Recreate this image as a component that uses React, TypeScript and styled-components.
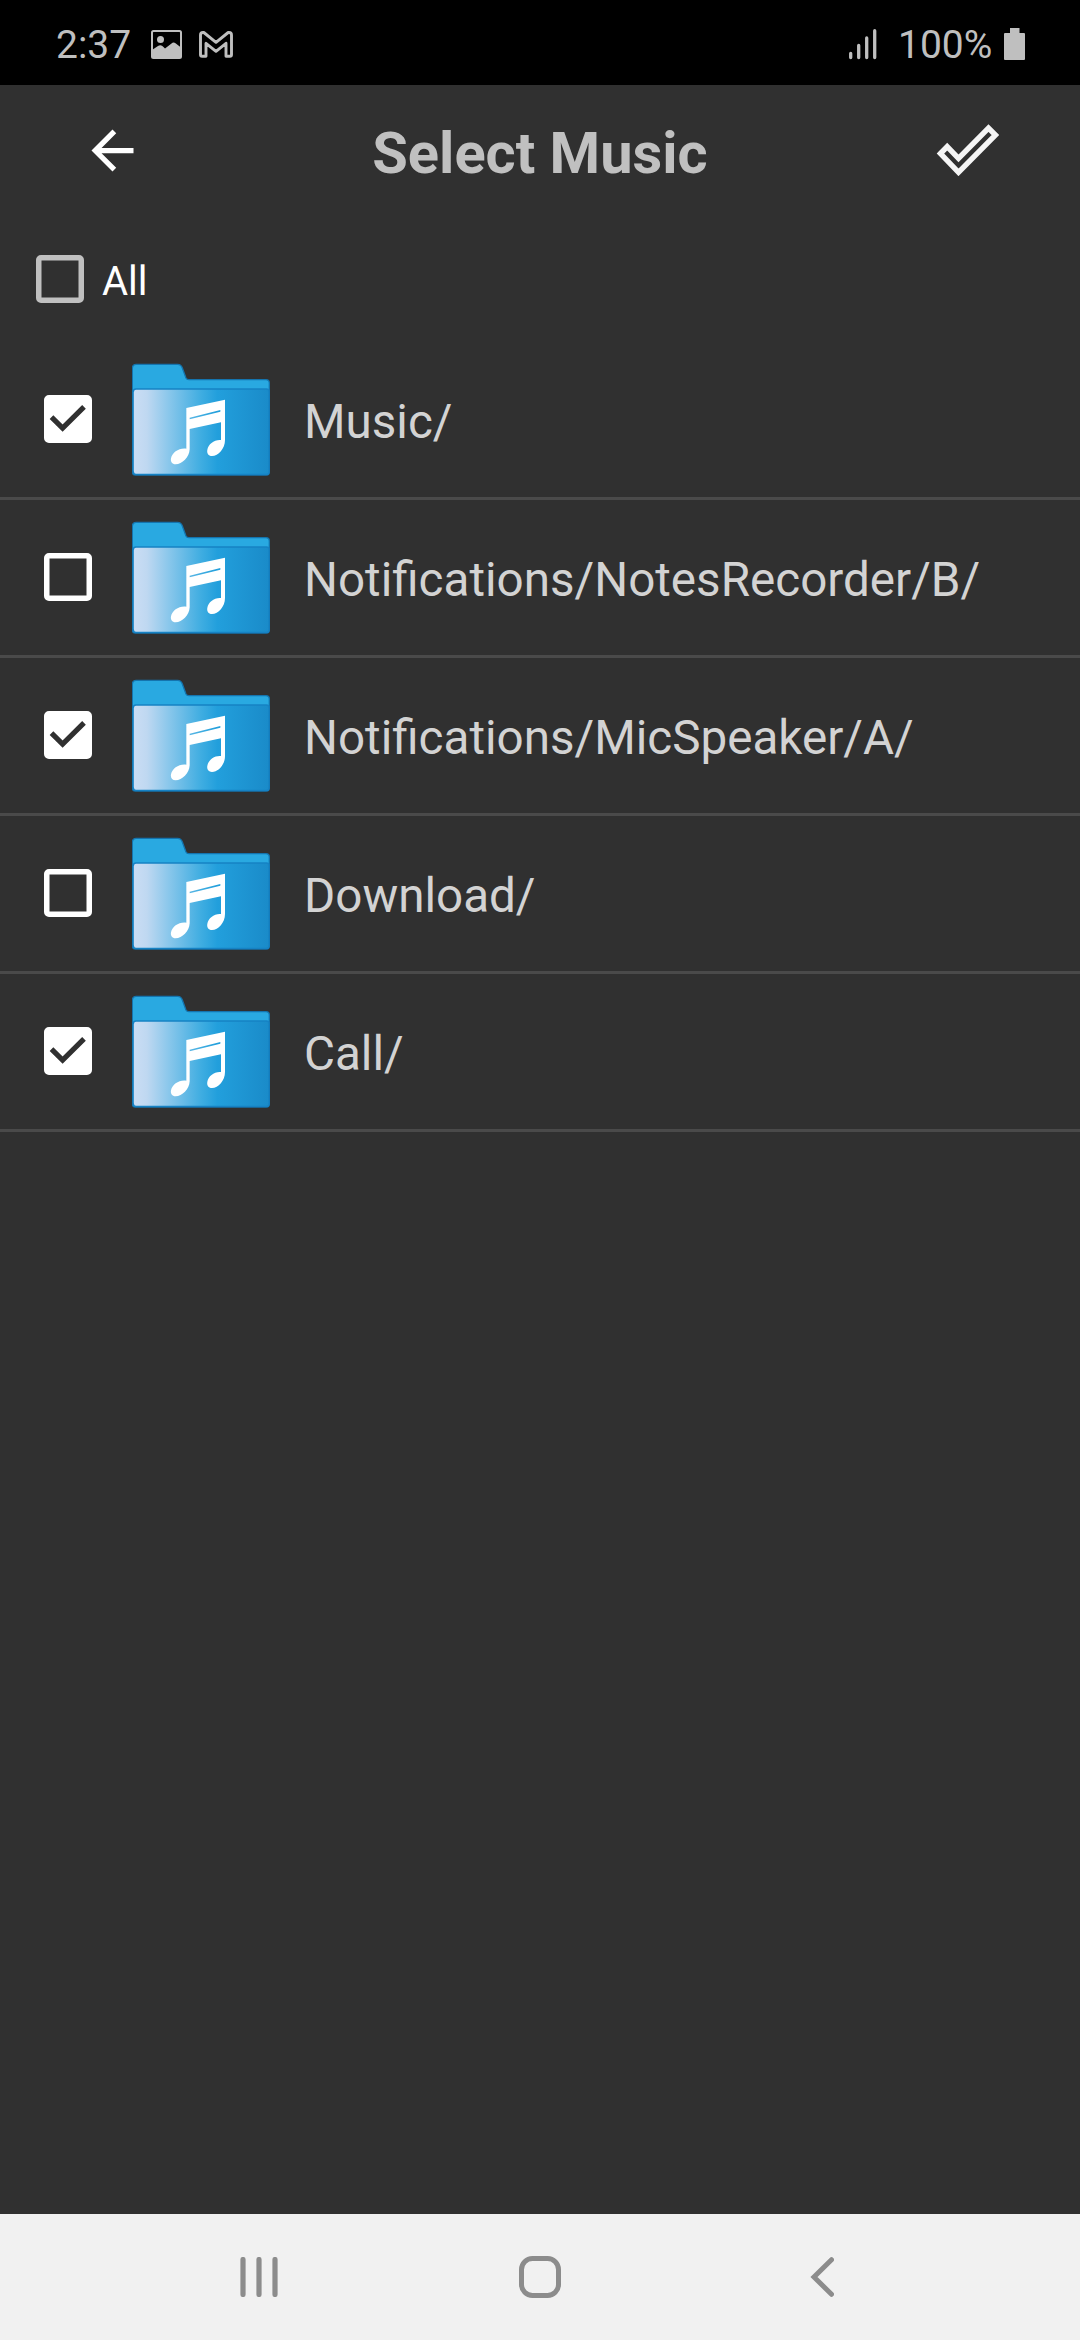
import React, { useState } from "react";
import styled, { createGlobalStyle } from "styled-components";

const GlobalStyle = createGlobalStyle`
  * { box-sizing: border-box; }
  body { margin: 0; background: #303030; }
`;

const Screen = styled.div`
  display: flex;
  flex-direction: column;
  width: 1080px;
  height: 2340px;
  background: #303030;
  font-family: Roboto, "Noto Sans", sans-serif;
`;

const StatusBar = styled.div`
  display: flex;
  align-items: center;
  justify-content: space-between;
  height: 85px;
  padding: 3px 55px 0 56px;
  background: #000;
  color: #bfbfbf;
`;

const StatusGroup = styled.div`
  display: flex;
  align-items: center;
`;

const StatusText = styled.span<{ $width: number; $gap?: number }>`
  flex: none;
  width: ${(p) => p.$width}px;
  margin-left: ${(p) => p.$gap ?? 0}px;
  padding-top: 1px;
  font-size: 39px;
  line-height: 46px;
  white-space: nowrap;
`;

const StatusIcon = styled.svg<{ $gap?: number }>`
  display: block;
  flex: none;
  margin-left: ${(p) => p.$gap ?? 0}px;
`;

const Header = styled.header`
  display: grid;
  grid-template-columns: 180px 1fr 180px;
  align-items: center;
  height: 130px;
`;

const Title = styled.h1`
  margin: 0;
  padding-top: 6px;
  color: #c0c0c0;
  font-size: 57.8px;
  font-weight: 700;
  line-height: 68px;
  text-align: center;
  white-space: nowrap;
`;

const IconButton = styled.button<{ $start: number }>`
  display: flex;
  padding: 0 0 0 ${(p) => p.$start}px;
  border: 0;
  background: none;
  color: #fff;
`;

const SelectAll = styled.label`
  display: flex;
  align-items: center;
  gap: 18px;
  height: 127px;
  padding: 1px 0 0 36px;
  color: #fff;
  font-size: 40px;
  line-height: 48px;
`;

const AllText = styled.span`
  padding-top: 5px;
`;

const Box = styled.span<{ $checked?: boolean; $muted?: boolean }>`
  display: flex;
  flex: none;
  width: 48px;
  height: 48px;
  color: ${(p) => (p.$muted ? "#c0c0c0" : "#fff")};
  border: 5px solid currentColor;
  border-radius: 5px;
  box-shadow: inset 0 0 0 0.5px currentColor;
  background: ${(p) => (p.$checked ? "#fff" : "transparent")};
`;

const List = styled.ul`
  flex: 1;
  margin: 0;
  padding: 0;
  list-style: none;
`;

const Row = styled.li`
  display: flex;
  align-items: center;
  height: 158px;
  padding-left: 44px;
  border-bottom: 3px solid #4a4a4a;

  > ${Box} {
    margin-bottom: 1px;
  }
`;

const FolderSvg = styled.svg`
  display: block;
  flex: none;
  margin: 0 34px 0 40px;
`;

const Path = styled.span`
  padding-top: 4px;
  color: #d3d3d3;
  font-size: 47.6px;
  line-height: 56px;
  white-space: nowrap;
`;

const NavBar = styled.nav`
  display: grid;
  grid-template-columns: 279px 291px 24px;
  align-items: center;
  height: 126px;
  padding-left: 240px;
  background: #f1f1f1;
`;

const Checkbox = ({ checked, muted, onClick }: { checked: boolean; muted?: boolean; onClick?: () => void }) => (
  <Box $checked={checked} $muted={muted} onClick={onClick} role="checkbox" aria-checked={checked}>
    {checked && (
      <svg width="38" height="38" viewBox="0 0 38 38">
        <path d="M2.500 17.200 L13.600 28 L35 6.800" fill="none" stroke="#303030" strokeWidth="5.200" />
      </svg>
    )}
  </Box>
);

const FolderIcon = () => (
  <FolderSvg width="138" height="113" viewBox="66 39 414 339">
    <defs>
      <linearGradient id="front" x1="0" x2="1" y1="0" y2="0">
        <stop offset="0" stopColor="#cbddf4" />
        <stop offset="0.1" stopColor="#bfd8f1" />
        <stop offset="0.26" stopColor="#8ac7eb" />
        <stop offset="0.5" stopColor="#3fade1" />
        <stop offset="0.62" stopColor="#229fdc" />
        <stop offset="1" stopColor="#1a8bc9" />
      </linearGradient>
    </defs>
    <path
      d="M67 56 Q67 43 78 43 H203 Q213 43 217 54 L228 84 Q230 89 237 89 H468 Q478 89 478 99 V366 Q478 375 469 375 H76 Q67 375 67 366 Z"
      fill="#29a9e1"
      stroke="#1474ae"
      strokeWidth="4"
    />
    <rect x="70" y="117" width="407" height="256" rx="8" fill="url(#front)" stroke="#1682c4" strokeWidth="4" />
    <path d="M73 126 V364" stroke="#cbddf4" strokeWidth="3" />
    <path
      fill="#fff"
      fillRule="evenodd"
      d="M229 174 L345 149 V270 C345 296 325 318 306 318 C295 318 290 309 292 299 C295 282 313 268 333 270 V217 L239 237 V298 C238 322 216 343 197 343 C186 343 181 335 183 325 C187 307 207 293 229 296 Z M239 203 L331 180 V185 L239 208 Z"
    />
  </FolderSvg>
);

const initialFolders = [
  { path: "Music/", checked: true },
  { path: "Notifications/NotesRecorder/B/", checked: false },
  { path: "Notifications/MicSpeaker/A/", checked: true },
  { path: "Download/", checked: false },
  { path: "Call/", checked: true },
];

export default function App() {
  const [folders, setFolders] = useState(initialFolders);
  const toggle = (index: number) =>
    setFolders(folders.map((f, i) => (i === index ? { ...f, checked: !f.checked } : f)));
  const all = folders.every((f) => f.checked);
  const toggleAll = () => setFolders(folders.map((f) => ({ ...f, checked: !all })));

  return (
    <Screen>
      <GlobalStyle />
      <StatusBar>
        <StatusGroup>
          <StatusText $width={75}>2:37</StatusText>
          <StatusIcon width="31" height="29" viewBox="0 0 31 29" $gap={20}>
            <rect x="1" y="1" width="29" height="27" rx="1.500" fill="none" stroke="#bfbfbf" strokeWidth="2" />
            <circle cx="9.500" cy="9.500" r="3.500" fill="#bfbfbf" />
            <path d="M1 20 L7 16 Q10 14 12.500 17 L14 18.500 L21.500 12.800 Q23 12 24.500 13.200 L30 17.500 V28 H1 Z" fill="#bfbfbf" />
          </StatusIcon>
          <StatusIcon width="34" height="27" viewBox="0 0 34 27" $gap={17}>
            <path
              d="M1.500 4 Q1.500 1.500 4 1.500 H4.800 L17 11.300 L29.200 1.500 H30 Q32.500 1.500 32.500 4 V23.700 Q32.500 25.300 30.900 25.300 H27 V12.300 L17 20.300 L7 12.300 V25.300 H3.100 Q1.500 25.300 1.500 23.700 Z"
              fill="none"
              stroke="#bfbfbf"
              strokeWidth="2.900"
              strokeLinejoin="round"
            />
          </StatusIcon>
        </StatusGroup>
        <StatusGroup>
          <StatusIcon width="28" height="31" viewBox="0 0 28 31">
            <path d="M1.700 24.500 V28.500 M9.700 16.500 V28.500 M17.700 9 V28.500 M25.700 1.700 V28.500" stroke="#bfbfbf" strokeWidth="3.300" strokeLinecap="round" />
          </StatusIcon>
          <StatusText $width={95} $gap={21}>100%</StatusText>
          <StatusIcon width="21" height="32" viewBox="0 0 21 32" $gap={11}>
            <path d="M6 0 H15.500 V5 H20 Q21 5 21 6 V31 Q21 32 20 32 H1 Q0 32 0 31 V6 Q0 5 1 5 H6 Z" fill="#bfbfbf" />
          </StatusIcon>
        </StatusGroup>
      </StatusBar>

      <Header>
        <IconButton $start={81} aria-label="Back">
          <svg width="63" height="63" viewBox="0 0 24 24">
            <path d="M20 11H7.830l5.590-5.590L12 4l-8 8 8 8 1.410-1.410L7.830 13H20v-2z" fill="currentColor" />
          </svg>
        </IconButton>
        <Title>Select Music</Title>
        <IconButton $start={36} aria-label="Done">
          <svg width="63" height="52" viewBox="0 0 63 52">
            <path d="M4.500 29.500 L11.200 22.700 L22.500 34.300 L52.500 4 L59.500 11 L22.500 48.300 Z" fill="none" stroke="#f5f5f5" strokeWidth="5.400" />
          </svg>
        </IconButton>
      </Header>

      <SelectAll>
        <Checkbox checked={all} muted onClick={toggleAll} />
        <AllText>All</AllText>
      </SelectAll>

      <List>
        {folders.map((folder, i) => (
          <Row key={folder.path}>
            <Checkbox checked={folder.checked} onClick={() => toggle(i)} />
            <FolderIcon />
            <Path>{folder.path}</Path>
          </Row>
        ))}
      </List>

      <NavBar>
        <svg width="38" height="40" viewBox="0 0 38 40">
          <path d="M3 2.500 V37.500 M19 2.500 V37.500 M35 2.500 V37.500" stroke="#8c8c8c" strokeWidth="5.200" strokeLinecap="round" />
        </svg>
        <svg width="42" height="42" viewBox="0 0 42 42">
          <rect x="2.500" y="2.500" width="37" height="37" rx="11" fill="none" stroke="#8c8c8c" strokeWidth="5" />
        </svg>
        <svg width="24" height="40" viewBox="0 0 24 40">
          <path d="M21.500 2.700 L4 20 L21.500 37.300" fill="none" stroke="#8c8c8c" strokeWidth="5" strokeLinecap="round" />
        </svg>
      </NavBar>
    </Screen>
  );
}
